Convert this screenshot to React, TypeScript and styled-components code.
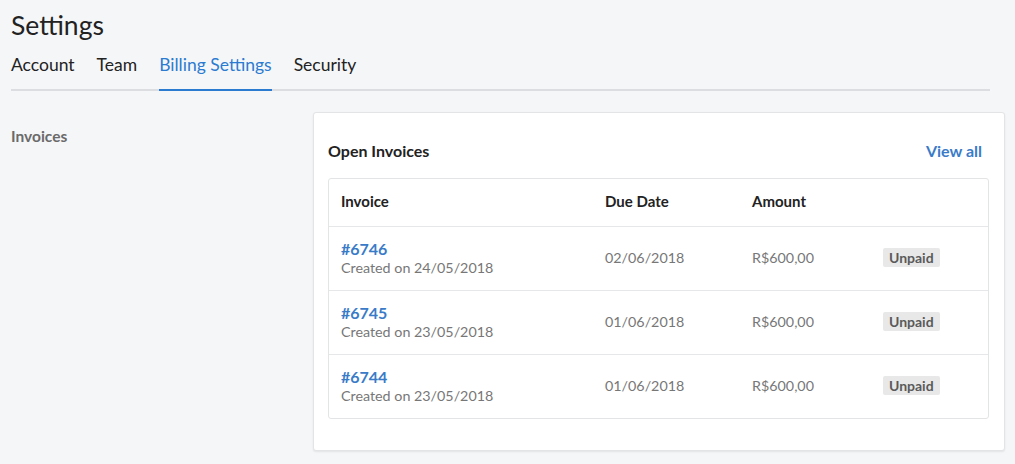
import React from 'react';
import styled, { createGlobalStyle } from 'styled-components';

const GlobalStyle = createGlobalStyle`
  html, body {
    margin: 0;
    padding: 0;
    background: #f5f6f8;
    font-family: Lato, "Open Sans", sans-serif;
    color: #222;
  }
`;

export const Page = styled.div`
  padding: 9px 10px 14px 11px;
  min-height: 440px;
  box-sizing: border-box;
`;

export const Title = styled.h1`
  margin: 0;
  font-size: 26.5px;
  font-weight: 400;
  line-height: 32px;
  color: #222;
`;

export const Tabs = styled.nav`
  display: flex;
  gap: 22px;
  margin: 14px 15px 0 0;
  border-bottom: 2px solid #dcdde0;
`;

export const Tab = styled.a<{ $active?: boolean }>`
  font-size: 17.5px;
  line-height: 20px;
  padding-bottom: 14px;
  margin-bottom: -2px;
  color: ${(p) => (p.$active ? '#2b7bd1' : '#222')};
  border-bottom: 2px solid ${(p) => (p.$active ? '#2b7bd1' : 'transparent')};
  cursor: pointer;
`;

export const Body = styled.div`
  display: grid;
  grid-template-columns: 302px 1fr;
  margin-top: 21px;
`;

export const SideLabel = styled.div`
  font-size: 15.5px;
  font-weight: 700;
  line-height: 18px;
  color: #6a6a6a;
  padding-top: 15px;
`;

export const Card = styled.section`
  background: #fff;
  border: 1px solid #e3e4e6;
  border-radius: 3px;
  box-shadow: 0 1px 2px rgba(0, 0, 0, 0.08);
  padding: 28px 15px 31px 14px;
`;

export const CardHeader = styled.div`
  display: flex;
  justify-content: space-between;
  align-items: center;
  margin-bottom: 18px;
  line-height: 19px;
`;

export const CardTitle = styled.h2`
  margin: 0;
  font-size: 16px;
  font-weight: 700;
  color: #222;
`;

export const ViewAll = styled.a`
  font-size: 16px;
  font-weight: 700;
  color: #3a7bc8;
  margin-right: 7px;
  cursor: pointer;
`;

export const Table = styled.div`
  border: 1px solid #e3e4e6;
  border-radius: 3px;
`;

export const Row = styled.div<{ $head?: boolean }>`
  display: grid;
  grid-template-columns: 264px 147px 131px 1fr;
  align-items: center;
  box-sizing: border-box;
  height: ${(p) => (p.$head ? '47px' : '64px')};
  padding: 0 0 ${(p) => (p.$head ? '3px' : '2px')} 12px;
  font-size: 14px;
  & + & {
    border-top: 1px solid #e6e7e9;
  }
`;

export const HeadCell = styled.div`
  font-size: 15px;
  font-weight: 700;
  color: #222;
`;

export const InvoiceCell = styled.div`
  display: flex;
  flex-direction: column;
  gap: 1px;
`;

export const InvoiceLink = styled.a`
  font-size: 16px;
  font-weight: 700;
  color: #3a7bc8;
  cursor: pointer;
`;

export const Muted = styled.div`
  color: #777;
  font-size: 14.3px;
`;

export const Badge = styled.span`
  display: inline-block;
  background: #e8e8e8;
  color: #5a5a5a;
  font-size: 14px;
  font-weight: 700;
  line-height: 17px;
  padding: 1px 6px;
  border-radius: 2px;
`;

const invoices = [
  { id: '#6746', created: '24/05/2018', due: '02/06/2018', amount: 'R$600,00' },
  { id: '#6745', created: '23/05/2018', due: '01/06/2018', amount: 'R$600,00' },
  { id: '#6744', created: '23/05/2018', due: '01/06/2018', amount: 'R$600,00' },
];

const App = () => {
  return (
    <>
      <GlobalStyle />
      <Page>
        <Title>Settings</Title>
        <Tabs>
          <Tab>Account</Tab>
          <Tab>Team</Tab>
          <Tab $active>Billing Settings</Tab>
          <Tab>Security</Tab>
        </Tabs>
        <Body>
          <SideLabel>Invoices</SideLabel>
          <Card>
            <CardHeader>
              <CardTitle>Open Invoices</CardTitle>
              <ViewAll>View all</ViewAll>
            </CardHeader>
            <Table>
              <Row $head>
                <HeadCell>Invoice</HeadCell>
                <HeadCell>Due Date</HeadCell>
                <HeadCell>Amount</HeadCell>
                <div />
              </Row>
              {invoices.map((inv) => (
                <Row key={inv.id}>
                  <InvoiceCell>
                    <InvoiceLink>{inv.id}</InvoiceLink>
                    <Muted>Created on {inv.created}</Muted>
                  </InvoiceCell>
                  <Muted>{inv.due}</Muted>
                  <Muted>{inv.amount}</Muted>
                  <div>
                    <Badge>Unpaid</Badge>
                  </div>
                </Row>
              ))}
            </Table>
          </Card>
        </Body>
      </Page>
    </>
  );
};

export default App;
